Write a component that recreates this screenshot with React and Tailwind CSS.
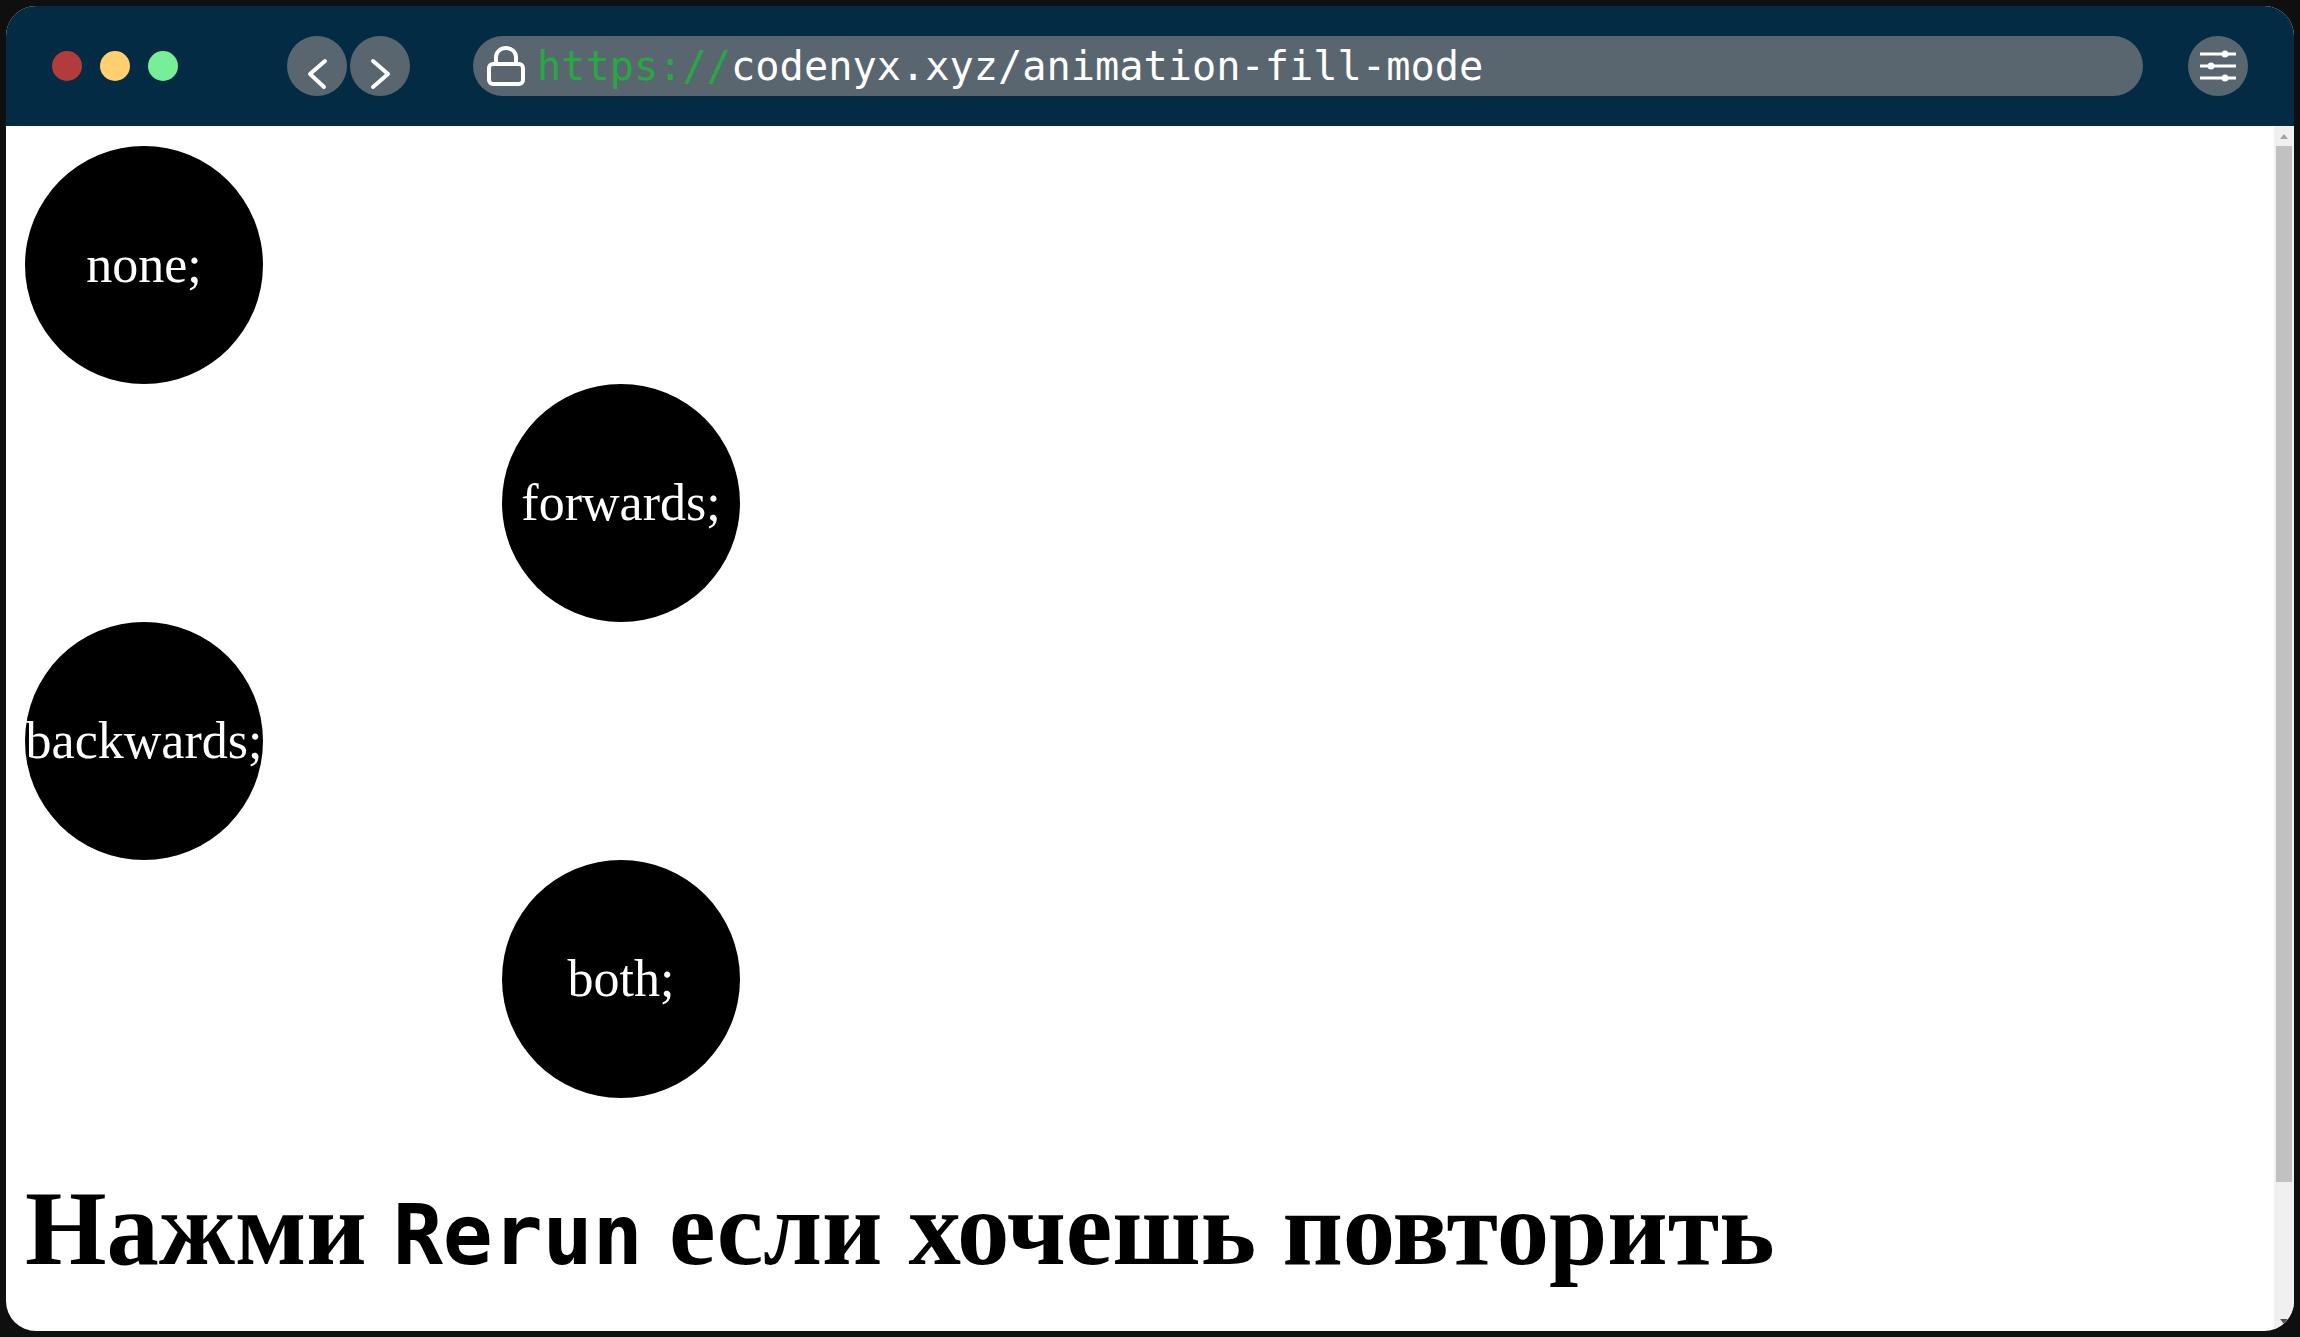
import React from "react";

function Dot({ className }) {
  return <span className={`w-[30px] h-[30px] rounded-full ${className}`} />;
}

function Chevron({ points }) {
  return (
    <div className="w-[60px] h-[60px] rounded-full bg-[#59666f]">
      <svg width="60" height="60" viewBox="0 0 60 60" fill="none">
        <polyline points={points} stroke="white" strokeWidth="4" strokeLinecap="round" strokeLinejoin="round" />
      </svg>
    </div>
  );
}

function Circle({ label, right }) {
  return (
    <div
      className={`w-[238px] h-[238px] rounded-full bg-black flex items-center justify-center text-white text-[52px] whitespace-nowrap ${
        right ? "ml-[477px]" : ""
      }`}
    >
      {label}
    </div>
  );
}

export default function App() {
  return (
    <div className="w-[2300px] h-[1337px] bg-[#0f0f0f] pt-[6px] pl-[6px] pr-[6px] pb-[6px] overflow-hidden">
      <div className="w-full h-full rounded-[30px] overflow-hidden flex flex-col bg-white">
        {/* title bar */}
        <div className="h-[120px] shrink-0 bg-[#032b43] flex items-center pl-[46px] pr-[46px] pb-[1px]">
          <div className="flex gap-[18px] w-[235px]">
            <Dot className="bg-[#b23b3b]" />
            <Dot className="bg-[#ffcf70]" />
            <Dot className="bg-[#76ef98]" />
          </div>
          <div className="flex gap-[3px] mr-[63px]">
            <Chevron points="38,25 23,38 37,51" />
            <Chevron points="23,25 38,38 23,51" />
          </div>
          <div className="h-[60px] w-[1670px] rounded-full bg-[#59666f] flex items-center pl-[14px] font-['DejaVu_Sans_Mono',monospace] text-[40.3px] text-white">
            <svg width="38" height="40" viewBox="0 0 38 40" fill="none" className="mr-[12px]">
              <rect x="2" y="18" width="34" height="20" rx="4" stroke="white" strokeWidth="4" />
              <path d="M9 18 V11 a10 9 0 0 1 20 0 V18" stroke="white" strokeWidth="4" />
            </svg>
            <span className="text-[#28a745] pt-[3px]">https://</span>
            <span className="pt-[3px]">codenyx.xyz/animation-fill-mode</span>
          </div>
          <div className="ml-[45px] w-[60px] h-[60px] rounded-full bg-[#59666f]">
            <svg width="60" height="60" viewBox="0 0 60 60" fill="white">
              <g stroke="white" strokeWidth="3">
                <line x1="12" y1="18" x2="48" y2="18" />
                <line x1="12" y1="30" x2="48" y2="30" />
                <line x1="12" y1="42" x2="48" y2="42" />
              </g>
              <circle cx="37" cy="18" r="3.5" />
              <circle cx="23" cy="30" r="3.5" />
              <circle cx="37" cy="42" r="3.5" />
            </svg>
          </div>
        </div>

        {/* page */}
        <div className="flex-1 flex min-h-0">
          <div className="flex-1 pt-[20px] pl-[19px] font-['Liberation_Serif',serif] text-black">
            <Circle label="none;" />
            <Circle label="forwards;" right />
            <Circle label="backwards;" />
            <Circle label="both;" right />
            <h1 className="mt-[71px] text-[104.8px] leading-[120px] font-bold whitespace-nowrap">
              Нажми <code className="font-['DejaVu_Sans_Mono',monospace] text-[83px]">Rerun</code> если хочешь повторить
            </h1>
          </div>

          {/* scrollbar */}
          <div className="w-[20px] shrink-0 bg-[#f0f0f0] flex flex-col items-center">
            <div className="h-[20px] flex items-center justify-center shrink-0">
              <span className="w-0 h-0 border-x-[4px] border-x-transparent border-b-[5px] border-b-[#a3a3a3]" />
            </div>
            <div className="w-[16px] h-[1036px] bg-[#c1c1c1] shrink-0" />
            <div className="flex-1" />
            <div className="h-[20px] flex items-center justify-center shrink-0">
              <span className="w-0 h-0 border-x-[4px] border-x-transparent border-t-[5px] border-t-[#505050]" />
            </div>
          </div>
        </div>
      </div>
    </div>
  );
}
